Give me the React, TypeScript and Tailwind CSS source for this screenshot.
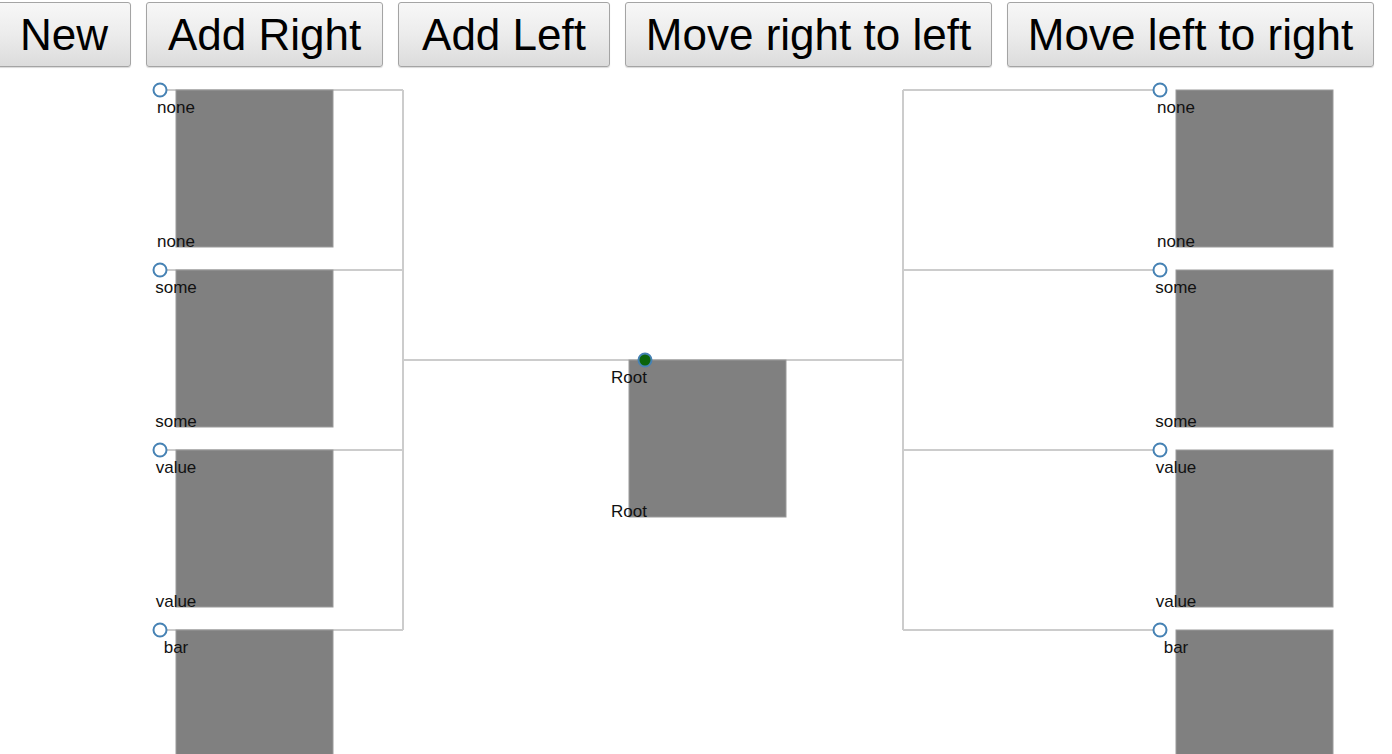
import React from "react";

type Node = { cx: number; cy: number; label: string; root?: boolean };

const LEFT_X = 160;
const RIGHT_X = 1160;
const ROWS = [90, 270, 450, 630];
const LABELS = ["none", "some", "value", "bar"];
const PAGE_H = 754;

const nodes: Node[] = [
  ...ROWS.map((y, i) => ({ cx: LEFT_X, cy: y, label: LABELS[i] })),
  ...ROWS.map((y, i) => ({ cx: RIGHT_X, cy: y, label: LABELS[i] })),
  { cx: 645, cy: 360, label: "Root", root: true },
];

const buttons = [
  { label: "New", w: "w-[134px]" },
  { label: "Add Right", w: "w-[237px]" },
  { label: "Add Left", w: "w-[212px]" },
  { label: "Move right to left", w: "w-[367px]" },
  { label: "Move left to right", w: "w-[367px]" },
];

const FONT = "'Liberation Sans', Arial, sans-serif";

export default function App() {
  return (
    <div className="w-[1392px] h-[754px] overflow-hidden bg-white font-['Liberation_Sans',Arial,sans-serif]">
      <div className="flex gap-[15px] ml-[-3px] pt-[2px] h-[67px]">
        {buttons.map((b) => (
          <button
            key={b.label}
            className={`${b.w} h-[65px] shrink-0 rounded-[3px] border border-[#a4a4a4] bg-gradient-to-b from-[#f7f7f7] via-[#ececec] to-[#dcdcdc] text-[44px] leading-none text-black shadow-[0_1px_1px_rgba(0,0,0,0.15)] flex items-center justify-center`}
          >
            {b.label}
          </button>
        ))}
      </div>
      <svg width={1392} height={687} viewBox="0 67 1392 687" className="block">
        <g fill="none" stroke="#cccccc" strokeWidth={2}>
          <line x1={403} y1={360} x2={645} y2={360} />
          <line x1={403} y1={90} x2={403} y2={630} />
          {ROWS.map((y) => (
            <line key={"l" + y} x1={LEFT_X} y1={y} x2={403} y2={y} />
          ))}
          <line x1={645} y1={360} x2={903} y2={360} />
          <line x1={903} y1={90} x2={903} y2={630} />
          {ROWS.map((y) => (
            <line key={"r" + y} x1={903} y1={y} x2={RIGHT_X} y2={y} />
          ))}
        </g>
        {nodes.map((n, i) => {
          const rx = n.root ? n.cx - 16 : n.cx + 16;
          const bottomY = n.cy + 157;
          return (
            <g key={i}>
              <rect
                x={rx}
                y={n.cy}
                width={157}
                height={157}
                fill="#808080"
                stroke="#9a9a9a"
                strokeWidth={1}
              />
              <circle
                cx={n.cx}
                cy={n.cy}
                r={6.5}
                fill={n.root ? "#0b640b" : "#ffffff"}
                stroke="#4682b4"
                strokeWidth={2}
              />
              <text
                x={rx}
                y={n.cy + 22.5}
                textAnchor="middle"
                fontFamily={FONT}
                fontSize={17}
                fill="#111"
              >
                {n.label}
              </text>
              {bottomY < PAGE_H && (
                <text
                  x={rx}
                  y={bottomY}
                  textAnchor="middle"
                  fontFamily={FONT}
                  fontSize={17}
                  fill="#111"
                >
                  {n.label}
                </text>
              )}
            </g>
          );
        })}
      </svg>
    </div>
  );
}
